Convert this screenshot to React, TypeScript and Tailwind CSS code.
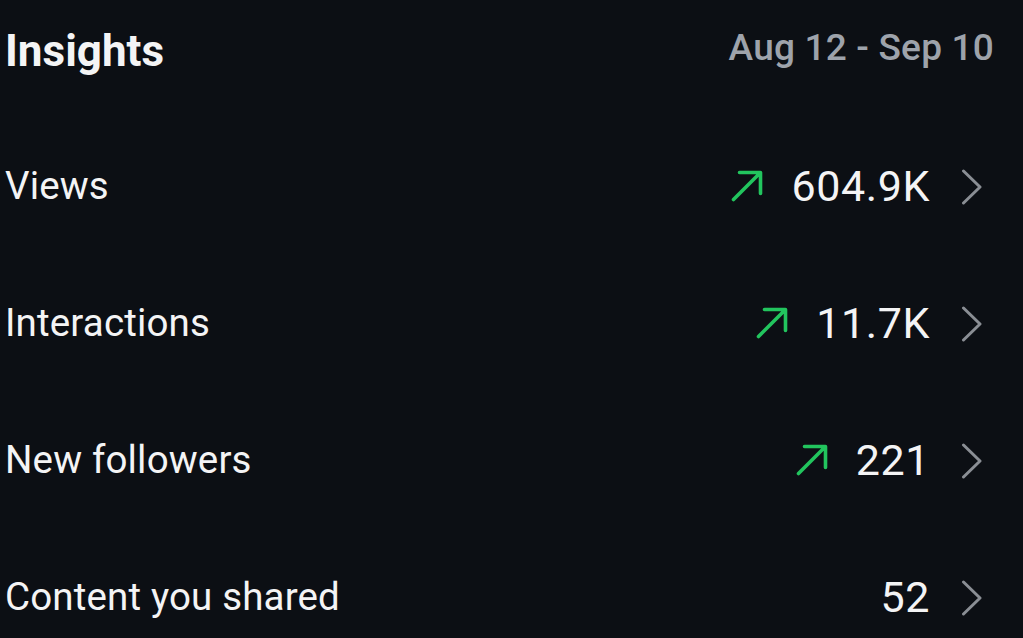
import React from "react";

const rows = [
  { label: "Views", value: "604.9K", up: true },
  { label: "Interactions", value: "11.7K", up: true },
  { label: "New followers", value: "221", up: true },
  { label: "Content you shared", value: "52", up: false },
];

function Arrow() {
  return (
    <svg width="32" height="32" viewBox="0 0 32 32" fill="none" className="shrink-0">
      <path d="M2.5 29.5 L29 3 M8.5 2.5 H29.5 V23.5" stroke="#22c55e" strokeWidth="3.6" strokeLinecap="round" strokeLinejoin="round" />
    </svg>
  );
}

function Chevron() {
  return (
    <svg width="22" height="36" viewBox="0 0 22 36" fill="none" className="shrink-0">
      <path d="M2.5 2 L19 18 L2.5 34" stroke="#8a8e94" strokeWidth="3" strokeLinecap="round" strokeLinejoin="round" />
    </svg>
  );
}

export default function App() {
  return (
    <div
      className="w-[1023px] h-[638px] overflow-hidden bg-[#0c0f14] text-[#f4f4f5] pl-[5px] pr-[40px]"
      style={{ fontFamily: "Roboto, 'Noto Sans', sans-serif" }}
    >
      <div className="h-[117px] flex items-start justify-between pt-[29px]">
        <div className="text-[44px] font-bold leading-none">Insights</div>
        <div className="text-[37px] leading-none text-[#9ea3ab] mt-[0px] mr-[-11px] font-medium tracking-[0.2px]">Aug 12 - Sep 10</div>
      </div>
      {rows.map((r) => (
        <div key={r.label} className="h-[137px] flex items-center justify-between pt-[1px]">
          <div className="text-[38.5px] leading-none tracking-[0.15px]">{r.label}</div>
          <div className="flex items-center">
            {r.up && <Arrow />}
            <div className="text-[43px] leading-none ml-[28px] tracking-[0.6px]">{r.value}</div>
            <div className="ml-[31px] mt-[2px]">
              <Chevron />
            </div>
          </div>
        </div>
      ))}
    </div>
  );
}
